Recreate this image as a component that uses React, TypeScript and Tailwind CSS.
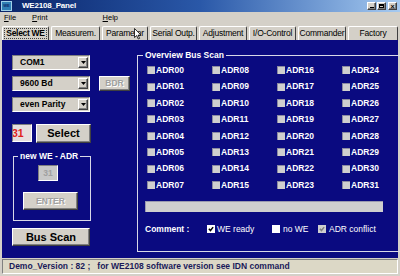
import React from 'react';

const raised =
  'bg-[#d4d0c8] border border-t-white border-l-white border-r-[#404040] border-b-[#404040] shadow-[inset_-1px_-1px_0_#808080]';
const sunken = 'border border-t-[#808080] border-l-[#808080] border-r-white border-b-white';

const TABS = [
  { label: 'Select WE', w: 'w-[47px]', active: true },
  { label: 'Measurem.', w: 'w-[49px]' },
  { label: 'Parameter', w: 'w-[46px]' },
  { label: 'Serial Outp.', w: 'w-[47px]' },
  { label: 'Adjustment', w: 'w-[48px]' },
  { label: 'I/O-Control', w: 'w-[47px]' },
  { label: 'Commander', w: 'w-[48px]' },
  { label: 'Factory', w: 'w-[50px]' },
];

const ADRS = Array.from({ length: 32 }, (_, i) => `ADR${String(i).padStart(2, '0')}`);

function Tick({ color }: { color: string }) {
  return (
    <svg width="6" height="6" viewBox="0 0 7 7">
      <path d="M1 3.3 L2.9 5.3 L6 1.3" fill="none" stroke={color} strokeWidth="1.7" />
    </svg>
  );
}

function Combo({ label }: { label: string }) {
  return (
    <div className={`w-[78px] h-[15px] bg-[#d4d0c8] flex items-center ${sunken}`}>
      <span className="flex-1 pl-[7px] text-[8.5px] font-bold leading-none text-black">{label}</span>
      <span className={`w-[10px] h-[11px] mr-[1px] flex items-center justify-center ${raised}`}>
        <svg width="5" height="3" viewBox="0 0 5 3">
          <path d="M0 0 H5 L2.5 3 Z" fill="#000" />
        </svg>
      </span>
    </div>
  );
}

export default function App() {
  return (
    <div className="relative w-[400px] h-[276px] overflow-hidden bg-[#d4d0c8] font-['Liberation_Sans',Arial,sans-serif] flex flex-col">
      {/* Title bar */}
      <div className="h-[12px] flex items-center bg-linear-to-r from-[#0a246a] via-[#2a58a8] to-[#a6caf0]">
        <div className="ml-[1px] w-[11px] h-[10px] bg-[#2f7fb5] border border-[#9fd0e8] flex items-center justify-center text-[4px] font-bold leading-none text-[#0b2a6a]">
          WE
        </div>
        <span className="ml-[10px] text-[8px] font-bold tracking-[-0.2px] text-white leading-none">WE2108_Panel</span>
        <div className="ml-auto mr-[3px] flex items-center gap-[1px]">
          <span className={`w-[9px] h-[8px] flex items-end justify-center pb-[1px] ${raised}`}>
            <span className="w-[4px] h-[1px] bg-black" />
          </span>
          <span className={`w-[9px] h-[8px] flex items-center justify-center ${raised}`}>
            <span className="w-[5px] h-[4px] border border-black border-t-2" />
          </span>
          <span className={`ml-[1px] w-[9px] h-[8px] flex items-center justify-center text-[7px] font-bold leading-none ${raised}`}>
            ×
          </span>
        </div>
      </div>

      {/* Menu bar */}
      <div className="h-[12px] flex items-center text-[7.5px] leading-none text-black">
        <span className="ml-[4px]"><span className="underline">F</span>ile</span>
        <span className="ml-[16px]"><span className="underline">P</span>rint</span>
        <span className="ml-[55px]"><span className="underline">H</span>elp</span>
      </div>

      {/* Tabs */}
      <div className="h-[16px] pt-[2px] flex items-end gap-[2px] pl-[2px]">
        {TABS.map(t => (
          <div
            key={t.label}
            className={`${t.w} h-[14px] shrink-0 flex items-center justify-center rounded-t-[2px] bg-[#d4d0c8] border-t border-l border-r border-t-white border-l-white border-r-[#404040] text-[8.5px] tracking-[-0.2px] leading-none text-black whitespace-nowrap overflow-hidden`}
          >
            {t.active ? (
              <span className="font-bold px-[1px] tracking-[-0.3px] outline outline-1 outline-dotted outline-[#404040]">{t.label}</span>
            ) : (
              t.label
            )}
          </div>
        ))}
      </div>

      {/* Body */}
      <div className="mx-[2px] h-[218px] bg-[#0a0a80] flex">
        {/* Left column */}
        <div className="w-[135px] shrink-0 pl-[10px] pt-[15px] flex flex-col">
          <Combo label="COM1" />
          <div className="mt-[6px] flex items-center">
            <Combo label="9600 Bd" />
            <div className={`ml-[9px] w-[31px] h-[15px] flex items-center justify-center text-[8.5px] font-bold text-[#a0a0a0] [text-shadow:1px_1px_0_#fff] ${raised}`}>
              BDR
            </div>
          </div>
          <div className="mt-[6px]">
            <Combo label="even Parity" />
          </div>
          <div className="mt-[12px] flex items-start">
            <div className={`w-[20px] h-[18px] bg-[#e6dede] flex items-center overflow-hidden ${sunken}`}>
              <span className="-ml-[1px] text-[10.5px] font-bold leading-none text-[#e02020]">31</span>
            </div>
            <div className={`ml-[4px] w-[55px] h-[19px] flex items-center justify-center text-[11px] font-bold text-black ${raised}`}>
              Select
            </div>
          </div>
          <fieldset className="mt-[8px] ml-[1px] w-[78px] h-[70px] border border-[#d8d8e8]">
            <legend className="ml-[4px] px-[2px] text-[8.5px] font-bold leading-[10px] text-white">new WE - ADR</legend>
            <div className={`mt-[4px] ml-[24px] w-[20px] h-[16px] bg-[#c8c8c8] flex items-center justify-center text-[8.5px] font-bold text-[#a0a0a0] ${sunken}`}>
              31
            </div>
            <div className={`mt-[11px] ml-[9px] w-[55px] h-[18px] flex items-center justify-center text-[8.5px] font-bold text-[#a0a0a0] [text-shadow:1px_1px_0_#fff] ${raised}`}>
              ENTER
            </div>
          </fieldset>
          <div className={`mt-[7px] w-[78px] h-[18px] flex items-center justify-center text-[11px] font-bold text-black ${raised}`}>
            Bus Scan
          </div>
        </div>

        {/* Overview group */}
        <fieldset className="mt-[10px] w-[255px] h-[202px] border border-[#d8d8e8]">
          <legend className="ml-[5px] px-[2px] text-[8.5px] font-bold leading-[11px] text-white">Overview Bus Scan</legend>
          <div className="mt-[1px] ml-[9px] grid grid-flow-col grid-rows-[repeat(8,16.4px)] grid-cols-[65px_65px_65px_65px]">
            {ADRS.map(a => (
              <div key={a} className="flex items-center gap-[1px]">
                <span className="w-[8px] h-[8px] bg-[#cfcfcf] border-t border-l border-[#8a8aa0]" />
                <span className="text-[8.5px] font-bold leading-none text-white">{a}</span>
              </div>
            ))}
          </div>
          <div className="mt-[8px] ml-[7px] w-[238px] h-[11px] bg-[#cfcfcf] border-t border-l border-[#9a9ab0]" />
          <div className="mt-[11px] h-[12px] flex items-center text-[8.5px] leading-none text-white">
            <span className="ml-[7px] w-[62px] font-bold">Comment :</span>
            <div className="w-[65px] flex items-center gap-[2px]">
              <span className="w-[8px] h-[8px] bg-white flex items-center justify-center">
                <Tick color="#000" />
              </span>
              <span>WE ready</span>
            </div>
            <div className="w-[46px] flex items-center gap-[3px]">
              <span className="w-[8px] h-[8px] bg-white" />
              <span>no WE</span>
            </div>
            <div className="flex items-center gap-[3px]">
              <span className="w-[8px] h-[8px] bg-[#cfcfcf] flex items-center justify-center">
                <Tick color="#808080" />
              </span>
              <span>ADR conflict</span>
            </div>
          </div>
        </fieldset>
      </div>

      {/* Status bar */}
      <div className="flex-1 px-[2px] pt-[1px] pb-[2px]">
        <div className={`h-full flex items-center pl-[6px] bg-[#dcd8c6] text-[8.5px] font-bold leading-none text-[#1a1a5a] whitespace-pre ${sunken}`}>
          Demo_Version : 82 ;   for WE2108 software version see IDN command
        </div>
      </div>

      {/* Mouse cursor over the tab strip */}
      <svg className="absolute left-[134px] top-[28px]" width="8" height="12" viewBox="0 0 8 12">
        <path d="M0.5 0.5 L0.5 9.5 L2.7 7.6 L4.3 11 L5.6 10.4 L4.1 7.1 L7 7.1 Z" fill="#fff" stroke="#000" strokeWidth="0.8" />
      </svg>
    </div>
  );
}
